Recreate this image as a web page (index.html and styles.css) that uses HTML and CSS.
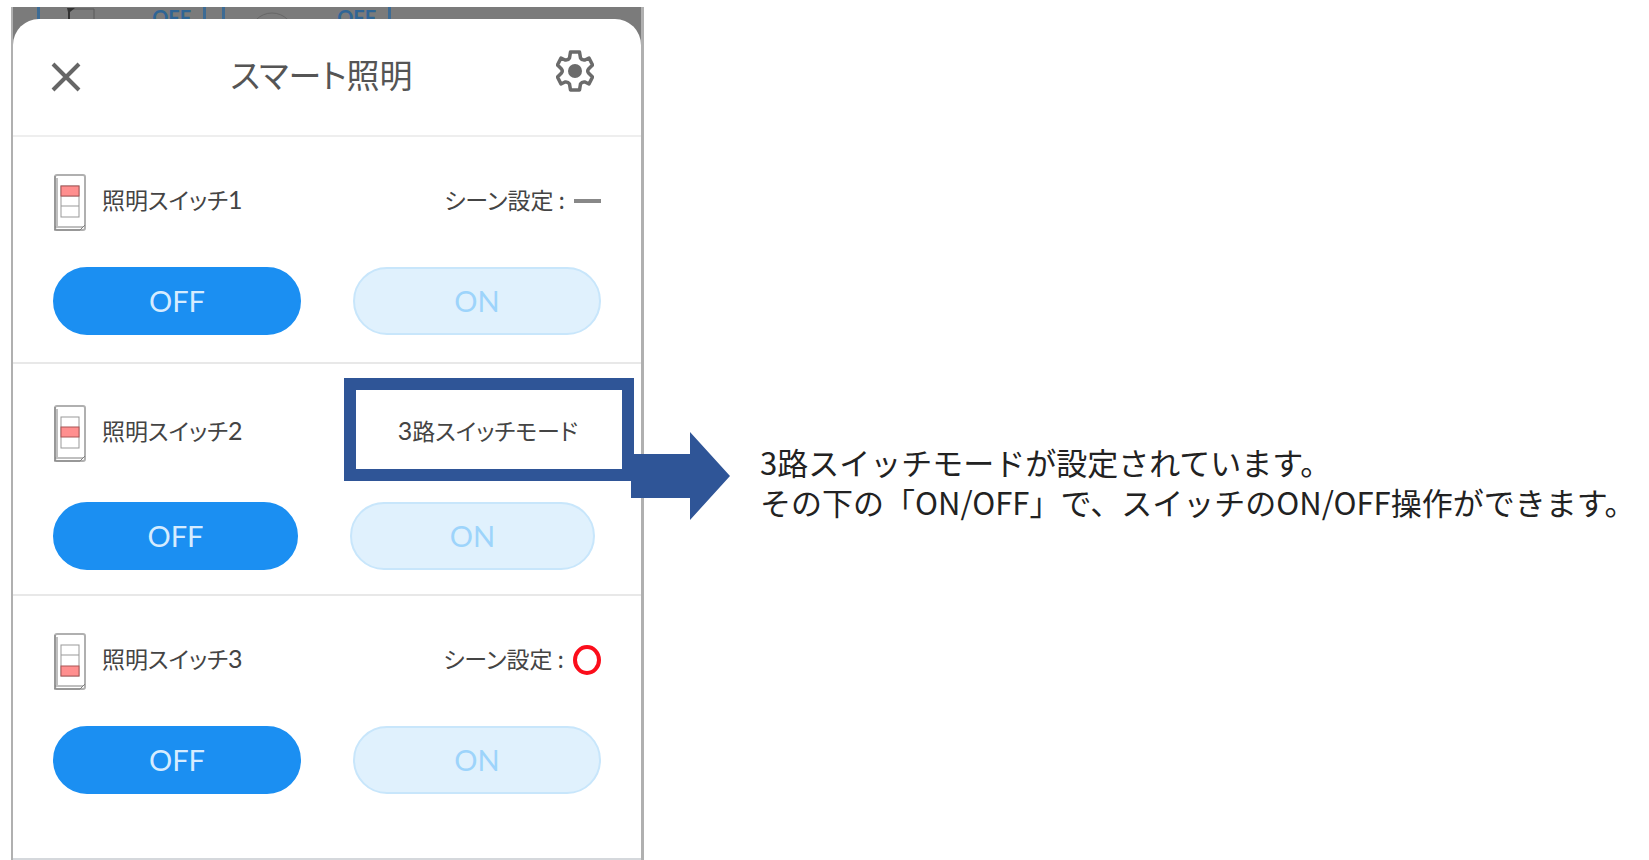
FILE: index.html
```html
<!DOCTYPE html>
<html lang="ja">
<head>
  <meta charset="UTF-8" />
  <meta name="viewport" content="width=device-width, initial-scale=1" />
  <title>スマート照明</title>
  <link rel="stylesheet" href="styles.css">
</head>
<body>
  <main class="guide">
    <div class="phone">
      <!-- dimmed screen behind the sheet -->
      <div class="backdrop" aria-hidden="true">
        <div class="tile">
          <svg class="tile-icon" width="30" height="24" viewBox="0 0 30 24" fill="none">
            <path d="M2 24V2h25v22" stroke="#5a5a5a" stroke-width="1"/>
            <path d="M0 1h8l-5 4v19H1V5z" fill="#333"/>
          </svg>
          <span>OFF</span>
        </div>
        <div class="tile">
          <svg class="tile-icon" width="40" height="24" viewBox="0 0 40 24" fill="none">
            <circle cx="20" cy="28" r="22" stroke="#666" stroke-width="1"/>
          </svg>
          <span>OFF</span>
        </div>
      </div>

      <div class="sheet">
        <header class="sheet-header">
          <button class="icon-btn" type="button" aria-label="閉じる">
            <svg width="30" height="30" viewBox="0 0 30 30">
              <path d="M2 2L28 28M28 2L2 28" stroke="#666" stroke-width="4" fill="none"/>
            </svg>
          </button>
          <h1>スマート照明</h1>
          <button class="icon-btn settings" type="button" aria-label="設定">
            <svg width="38" height="44" viewBox="0 0 38 44">
              <path d="M14.500 3H23.500L24.500 9Q26 11.500 29 11L33 9L36.500 16L32.500 20Q31 22 32.500 24L36.500 28L33 35L29 33Q26 32.500 24.500 35L23.500 41H14.500L13.500 35Q12 32.500 9 33L5 35L1.500 28L5.500 24Q7 22 5.500 20L1.500 16L5 9L9 11Q12 11.500 13.500 9Z" fill="none" stroke="#6b6b6b" stroke-width="3.500" stroke-linejoin="round"/>
              <circle cx="19" cy="22" r="7" fill="#6b6b6b"/>
            </svg>
          </button>
        </header>

        <section class="light">
          <div class="light-info">
            <svg class="switch" width="34" height="58" viewBox="0 0 34 58">
              <rect x="2" y="1" width="30" height="55" rx="2" fill="#fff" stroke="#b0b0b0" stroke-width="2"/>
              <path d="M2 2v54M1 56h26l5-5M2 53h28M4 4v48" stroke="#808080" stroke-width="1" fill="none"/>
              <rect x="8" y="12" width="18" height="31" fill="#fff" stroke="#999"/>
              <path d="M8 22h18M8 32h18" stroke="#999"/>
              <rect x="8" y="12" width="18" height="10" fill="#ff8f8f" stroke="#a55"/>
            </svg>
            <h2>照明スイッチ<span class="num">1</span></h2>
            <p class="scene">シーン設定 : <span class="scene-none" role="img" aria-label="なし"></span></p>
          </div>
          <div class="light-actions">
            <button class="pill off" type="button">OFF</button>
            <button class="pill on" type="button">ON</button>
          </div>
        </section>

        <section class="light three-way">
          <div class="light-info">
            <svg class="switch" width="34" height="58" viewBox="0 0 34 58">
              <rect x="2" y="1" width="30" height="55" rx="2" fill="#fff" stroke="#b0b0b0" stroke-width="2"/>
              <path d="M2 2v54M1 56h26l5-5M2 53h28M4 4v48" stroke="#808080" stroke-width="1" fill="none"/>
              <rect x="8" y="12" width="18" height="31" fill="#fff" stroke="#999"/>
              <rect x="8" y="22" width="18" height="10" fill="#ff8f8f" stroke="#a55"/>
            </svg>
            <h2>照明スイッチ<span class="num">2</span></h2>
            <p class="mode"><span class="num">3</span>路スイッチモード</p>
            <div class="highlight">
              <svg class="arrow" width="99" height="88" viewBox="0 0 99 88">
                <path d="M0 22H59V0L99 44L59 88V66H0Z" fill="#2f5597"/>
              </svg>
            </div>
          </div>
          <div class="light-actions">
            <button class="pill off" type="button">OFF</button>
            <button class="pill on" type="button">ON</button>
          </div>
        </section>

        <section class="light">
          <div class="light-info">
            <svg class="switch" width="34" height="58" viewBox="0 0 34 58">
              <rect x="2" y="1" width="30" height="55" rx="2" fill="#fff" stroke="#b0b0b0" stroke-width="2"/>
              <path d="M2 2v54M1 56h26l5-5M2 53h28M4 4v48" stroke="#808080" stroke-width="1" fill="none"/>
              <rect x="8" y="12" width="18" height="31" fill="#fff" stroke="#999"/>
              <path d="M8 22h18" stroke="#999"/>
              <rect x="8" y="33" width="18" height="10" fill="#ff8f8f" stroke="#a55"/>
            </svg>
            <h2>照明スイッチ<span class="num">3</span></h2>
            <p class="scene">シーン設定 : <span class="scene-set" role="img" aria-label="あり"></span></p>
          </div>
          <div class="light-actions">
            <button class="pill off" type="button">OFF</button>
            <button class="pill on" type="button">ON</button>
          </div>
        </section>
      </div>
    </div>

    <p class="caption">3路スイッチモードが設定されています。<br>その下の「ON/OFF」で、スイッチのON/OFF操作ができます。</p>
  </main>
</body>
</html>
```

FILE: styles.css
```css
* {
  box-sizing: border-box;
}
body {
  margin: 0;
  background: #fff;
  color: #444;
  font-family: "Noto Sans CJK JP", sans-serif;
}
h1, h2, p {
  margin: 0;
  font-weight: normal;
}
button {
  font: inherit;
  cursor: pointer;
}
.guide {
  display: flex;
  align-items: center;
  gap: 116px;
  padding: 7px 0 0 11px;
}
.phone {
  flex: 0 1 633px;
  border: solid #b0b0b0;
  border-width: 0 3px 0 2px;
  background: #7b7b7b;
}

/* screen behind the sheet */
.backdrop {
  display: flex;
  gap: 16px;
  height: 12px;
  padding-left: 24px;
  overflow: hidden;
}
.tile {
  display: flex;
  justify-content: space-between;
  width: 169px;
  height: 60px;
  padding: 0 12px 0 27px;
  border: solid #3d6b94;
  border-width: 0 3px;
  color: #2f6595;
  font: bold 20px/20px Lato, sans-serif;
}

.sheet {
  background: #fff;
  border-radius: 26px 26px 0 0;
}
.sheet-header {
  display: flex;
  align-items: center;
  justify-content: space-between;
  height: 118px;
  padding: 0 47px 0 38px;
  border-bottom: 2px solid #eee;
}
.sheet-header h1 {
  padding: 0 0 6px 6px;
  color: #555;
  font-size: 33px;
  line-height: 40px;
  font-feature-settings: "palt";
}
.icon-btn {
  display: flex;
  padding: 0;
  border: 0;
  background: none;
}
.settings {
  margin-bottom: 12px;
}

.light {
  padding: 37px 40px 27px 40px;
  border-bottom: 2px solid #e8e8e8;
}
.light:last-child {
  padding-bottom: 64px;
  border-color: #d5d8dc;
}
.light-info {
  display: flex;
  align-items: center;
  gap: 15px;
  margin-bottom: 35px;
  position: relative;
}
.light-info h2,
.scene,
.mode {
  padding-bottom: 8px;
  font-size: 23px;
  line-height: 32px;
  font-feature-settings: "palt";
}
.num {
  font-family: Lato, sans-serif;
  font-size: 25px;
}
.scene,
.mode {
  display: flex;
  align-items: center;
  margin-left: auto;
}
.scene {
  gap: 9px;
}
.scene-none,
.scene-set {
  margin-top: 4px;
}
.scene-none {
  width: 27px;
  height: 4px;
  background: #888;
}
.scene-set {
  width: 28px;
  height: 30px;
  border: 4px solid #fb0d1b;
  border-radius: 50%;
}

.light-actions {
  display: grid;
  grid-template-columns: 1fr 1fr;
  gap: 52px;
}
.pill {
  height: 68px;
  border: 2px solid #1b8ff2;
  border-radius: 34px;
  background: #1b8ff2;
  color: #d6ecff;
  font: 29px/32px Lato, sans-serif;
}
.pill.on {
  border-color: #c8e6fb;
  background: #e0f1fd;
  color: #9dd4fb;
}

.three-way {
  padding: 41px 46px 24px 40px;
}
.three-way .light-info {
  margin-bottom: 39px;
}
.mode {
  margin-right: 17px;
}
/* annotation frame drawn over the mode label */
.highlight {
  position: absolute;
  top: -27px;
  right: -39px;
  width: 290px;
  height: 103px;
  border: 12px solid #2f5597;
}
.arrow {
  position: absolute;
  top: 42px;
  left: 275px;
}

.caption {
  flex: 1;
  padding-top: 96px;
  color: #222;
  font-size: 31px;
  line-height: 40px;
  white-space: nowrap;
}
```
